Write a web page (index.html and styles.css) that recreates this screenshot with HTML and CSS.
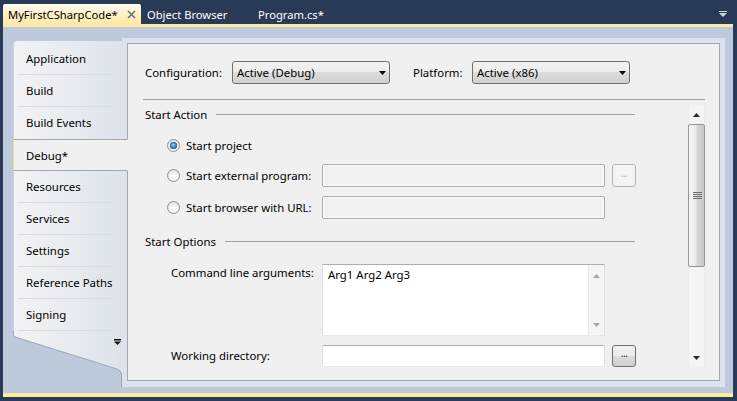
FILE: index.html
```html
<!DOCTYPE html>
<html>
<head>
<meta charset="utf-8">
<link rel="stylesheet" href="styles.css">
</head>
<body>
<div class="tabstrip">
  <div class="doctab active"><span class="tabtext">MyFirstCSharpCode*</span><svg class="close" width="9" height="9" viewBox="0 0 9 9"><path d="M1 1 L8 8 M8 1 L1 8" stroke="#6f6f6f" stroke-width="1.6"/></svg></div>
  <div class="doctab t2">Object Browser</div>
  <div class="doctab t3">Program.cs*</div>
  <div class="spacer"></div>
  <svg class="dropglyph" width="8" height="6" viewBox="0 0 8 6"><rect x="0" y="0" width="8" height="1" fill="#ced6e3"/><path d="M0 2 L8 2 L4 6 Z" fill="#ced6e3"/></svg>
</div>
<div class="docbody">
  <nav class="sidebar">
    <div class="navlist">
      <div class="navitem">Application</div>
      <div class="navitem">Build</div>
      <div class="navitem nosep">Build Events</div>
      <div class="navitem selected">Debug*</div>
      <div class="navitem">Resources</div>
      <div class="navitem">Services</div>
      <div class="navitem">Settings</div>
      <div class="navitem">Reference Paths</div>
      <div class="navitem">Signing</div>
    </div>
    <svg class="navbottom" width="115" height="56" viewBox="0 0 115 56">
      <defs>
        <linearGradient id="sbg" x1="0" y1="0" x2="1" y2="0">
          <stop offset="0" stop-color="#f3f3f4"/>
          <stop offset="1" stop-color="#dde2ea"/>
        </linearGradient>
      </defs>
      <path d="M0 0 L0 4 L2 6 L104 38 L107 40 L109 43 L109 56 L115 56 L115 0 Z" fill="url(#sbg)"/>
      <path d="M0.5 0 L0.5 4 L2 6 L104 38 L107 40 L108.5 43 L108.5 56" fill="none" stroke="#9ba7b8" stroke-width="1"/>
      <rect x="114" y="0" width="1" height="50" fill="#a0a8b3"/>
      <rect x="101" y="8" width="7" height="1.5" fill="#111"/>
      <path d="M101 10.5 L108 10.5 L104.5 14 Z" fill="#111"/>
    </svg>
  </nav>
  <div class="frame">
    <div class="panel">
      <div class="configrow">
        <span class="cfglabel">Configuration:</span>
        <div class="combo"><span>Active (Debug)</span><svg width="7" height="4" viewBox="0 0 7 4"><path d="M0 0 L7 0 L3.5 4 Z" fill="#000"/></svg></div>
        <span class="platlabel">Platform:</span>
        <div class="combo"><span>Active (x86)</span><svg width="7" height="4" viewBox="0 0 7 4"><path d="M0 0 L7 0 L3.5 4 Z" fill="#000"/></svg></div>
      </div>
      <div class="rule"></div>
      <div class="lower">
        <div class="form">
          <div class="section s1"><span>Start Action</span><div class="sline"></div></div>
          <div class="optrow r1">
            <div class="optlabel"><span class="radio checked"><span class="dot"></span></span><span>Start project</span></div>
          </div>
          <div class="optrow r2">
            <div class="optlabel"><span class="radio"></span><span>Start external program:</span></div>
            <div class="textbox disabled"></div>
            <div class="browse disabled">...</div>
          </div>
          <div class="optrow r3">
            <div class="optlabel"><span class="radio"></span><span>Start browser with URL:</span></div>
            <div class="textbox disabled"></div>
          </div>
          <div class="section s2"><span>Start Options</span><div class="sline"></div></div>
          <div class="argrow">
            <div class="arglabel">Command line arguments:</div>
            <div class="textarea">
              <div class="tacontent">Arg1 Arg2 Arg3</div>
              <div class="tascroll">
                <svg width="7" height="4" viewBox="0 0 7 4"><path d="M0 4 L7 4 L3.5 0 Z" fill="#a8a8a8"/></svg>
                <svg width="7" height="4" viewBox="0 0 7 4"><path d="M0 0 L7 0 L3.5 4 Z" fill="#a8a8a8"/></svg>
              </div>
            </div>
          </div>
          <div class="workrow">
            <div class="arglabel">Working directory:</div>
            <div class="textbox white"></div>
            <div class="browse">...</div>
          </div>
        </div>
        <div class="vscroll">
          <div class="arrow up"><svg width="7" height="4" viewBox="0 0 7 4"><path d="M0 4 L7 4 L3.5 0 Z" fill="#2a2a2a"/></svg></div>
          <div class="thumb"><svg width="9" height="8" viewBox="0 0 9 8"><path d="M0 0.5 H9 M0 2.5 H9 M0 4.5 H9 M0 6.5 H9" stroke="#6a6a6a" stroke-width="1"/></svg></div>
          <div class="track"></div>
          <div class="arrow down"><svg width="7" height="4" viewBox="0 0 7 4"><path d="M0 0 L7 0 L3.5 4 Z" fill="#2a2a2a"/></svg></div>
        </div>
      </div>
    </div>
  </div>
</div>
</body>
</html>
```

FILE: styles.css
```css
html, body {
  margin: 0;
  padding: 0;
}
body {
  width: 737px;
  height: 401px;
  overflow: hidden;
  background: #293a57;
  font-family: "Noto Sans", "DejaVu Sans", sans-serif;
  font-size: 11.4px;
  color: #000;
}

/* ---------- tab strip ---------- */
.tabstrip {
  height: 24px;
  display: flex;
  align-items: flex-end;
  padding-left: 3px;
  box-sizing: border-box;
}
.doctab {
  height: 20px;
  display: flex;
  align-items: center;
  box-sizing: border-box;
  color: #fff;
  font-size: 11.2px;
}
.doctab.active {
  width: 138px;
  padding-left: 5px;
  color: #000;
  background: linear-gradient(#fffbf1 0%, #fff2cd 45%, #ffe8a6 100%);
  border-radius: 2px 2px 0 0;
}
.tabtext {
  flex: 1;
}
.close {
  margin-right: 5px;
  margin-top: 1px;
}
.doctab.t2 {
  width: 111px;
  padding-left: 6px;
}
.doctab.t3 {
  padding-left: 6px;
}
.spacer {
  flex: 1;
}
.dropglyph {
  align-self: center;
  margin: 4px 10px 0 0;
}

/* ---------- document body ---------- */
.docbody {
  margin: 0 4px 0 3px;
  height: 373px;
  box-sizing: border-box;
  border-top: 3px solid #ffe8a6;
  border-bottom: 4px solid #ffe8a6;
  background: #bccadb;
  padding: 11px 8px 6px 10px;
  display: flex;
}

/* ---------- sidebar ---------- */
.sidebar {
  width: 115px;
  flex: none;
  margin-top: 3px;
  margin-right: -6px;
  position: relative;
  z-index: 1;
  display: flex;
  flex-direction: column;
}
.navlist {
  padding-top: 2px;
  background: linear-gradient(to right, #f3f3f4, #dde2ea);
  border-left: 1px solid #c9d0da;
  border-top-left-radius: 4px;
  box-sizing: border-box;
}
.navitem {
  height: 32px;
  box-sizing: border-box;
  display: flex;
  align-items: center;
  padding-left: 12px;
  padding-bottom: 1px;
  border-right: 1px solid #a0a8b3;
  background-image: linear-gradient(#d9dde2, #d9dde2);
  background-size: 95px 1px;
  background-position: 4px 31px;
  background-repeat: no-repeat;
  color: #000;
}
.navitem.nosep {
  background-image: none;
}
.navitem.selected {
  background: #f0f0f0;
  border-top: 1px solid #a0a8b3;
  border-bottom: 1px solid #a0a8b3;
  border-right: 1px solid #f0f0f0;
  margin-left: -1px;
  border-left: 1px solid #f6d78a;
  padding-left: 12px;
  padding-bottom: 0;
}
.navbottom {
  display: block;
  flex: none;
}

/* ---------- frame / panel ---------- */
.frame {
  flex: 1;
  background: #dce3ec;
  padding: 5px 5px 6px 5px;
  display: flex;
}
.panel {
  flex: 1;
  background: #f0f0f0;
  border: 1px solid #a0a8b3;
  display: flex;
  flex-direction: column;
}
.configrow {
  margin-top: 17px;
  height: 23px;
  padding-left: 17px;
  display: flex;
  align-items: center;
}
.cfglabel {
  width: 87px;
}
.platlabel {
  margin-left: 23px;
  width: 59px;
}
.combo {
  width: 158px;
  height: 23px;
  box-sizing: border-box;
  border: 1px solid #707070;
  border-radius: 3px;
  background: linear-gradient(#f2f2f2 0%, #ebebeb 50%, #dddddd 50%, #cfcfcf 100%);
  display: flex;
  align-items: center;
  justify-content: space-between;
  padding: 0 3px 0 4px;
}
.combo svg {
  display: block;
}
.rule {
  margin: 15px 14px 0 15px;
  height: 1px;
  background: #a0a0a0;
}
.lower {
  flex: 1;
  display: flex;
}
.form {
  flex: 1;
  padding-left: 17px;
  display: flex;
  flex-direction: column;
}
.section {
  height: 16px;
  display: flex;
  align-items: center;
}
.section.s1 {
  margin-top: 6px;
}
.section.s2 {
  margin-top: 14px;
}
.sline {
  flex: 1;
  height: 1px;
  background: #a0a0a0;
  margin: 1px 53px 0 9px;
}
.optrow {
  height: 23px;
  margin-left: 22px;
  display: flex;
  align-items: center;
}
.optrow.r1 { margin-top: 12px; }
.optrow.r2 { margin-top: 7px; }
.optrow.r3 { margin-top: 9px; }
.optlabel {
  width: 155px;
  display: flex;
  align-items: center;
}
.radio {
  width: 13px;
  height: 13px;
  box-sizing: border-box;
  border-radius: 50%;
  border: 1px solid #8f8f8f;
  background: radial-gradient(circle at 50% 60%, #ffffff 0%, #f4f4f4 40%, #d8d8d8 100%);
  margin-right: 6px;
  display: flex;
  align-items: center;
  justify-content: center;
}
.radio .dot {
  width: 7px;
  height: 7px;
  border-radius: 50%;
  background: radial-gradient(circle at 45% 40%, #8fd4ff 0%, #2b7cc5 55%, #184f85 100%);
  box-shadow: 0 0 0 1px #4c6887 inset;
}
.textbox {
  width: 283px;
  height: 23px;
  box-sizing: border-box;
  border-radius: 2px;
}
.textbox.disabled {
  border: 1px solid #afafaf;
  background: #f2f2f2;
  box-shadow: inset 0 0 0 1px #fbfbfb;
}
.textbox.white {
  height: 22px;
  background: #fff;
  border: 1px solid #dbdfe6;
  border-top-color: #abadb3;
  border-bottom-color: #e3e9ef;
}
.browse {
  width: 24px;
  height: 22px;
  box-sizing: border-box;
  margin-left: 7px;
  border: 1px solid #707070;
  border-radius: 3px;
  background: linear-gradient(#f2f2f2 0%, #ebebeb 50%, #dddddd 50%, #cfcfcf 100%);
  font-size: 10px;
  line-height: 14px;
  text-align: center;
  color: #333;
  letter-spacing: -0.5px;
}
.browse.disabled {
  height: 23px;
  border-color: #b3b3b3;
  background: #f4f4f4;
  color: #adadad;
  line-height: 16px;
}
.argrow {
  margin-top: 15px;
  margin-left: 26px;
  display: flex;
}
.arglabel {
  width: 151px;
  padding-top: 1px;
  line-height: 16px;
}
.textarea {
  width: 283px;
  height: 72px;
  box-sizing: border-box;
  background: #fff;
  border: 1px solid #dbdfe6;
  border-top-color: #abadb3;
  border-bottom-color: #e3e9ef;
  display: flex;
}
.tacontent {
  flex: 1;
  padding: 2px 0 0 5px;
  line-height: 16px;
}
.tascroll {
  width: 16px;
  background: #f5f5f5;
  border-left: 1px solid #ebebeb;
  display: flex;
  flex-direction: column;
  justify-content: space-between;
  align-items: center;
  padding: 9px 0 8px;
  box-sizing: border-box;
}
.tascroll svg {
  display: block;
}
.workrow {
  margin-top: 9px;
  margin-left: 26px;
  height: 22px;
  display: flex;
  align-items: center;
}
.workrow .arglabel {
  padding-top: 0;
}

/* ---------- vertical scrollbar ---------- */
.vscroll {
  width: 15px;
  margin: 5px 14px 13px 0;
  display: flex;
  flex-direction: column;
  background: #f4f4f4;
  border-left: 1px solid #ececec;
  border-right: 1px solid #ececec;
}
.arrow {
  height: 19px;
  display: flex;
  align-items: center;
  justify-content: center;
}
.arrow svg {
  display: block;
}
.thumb {
  height: 143px;
  margin: 0 -1px;
  box-sizing: border-box;
  border: 1px solid #979797;
  border-radius: 2px;
  background: linear-gradient(to right, #f6f6f6 0%, #e9e9e9 45%, #d6d6d6 55%, #c9c9c9 100%);
  display: flex;
  align-items: center;
  justify-content: center;
}
.thumb svg {
  display: block;
  margin-left: 1px;
}
.track {
  flex: 1;
}
```
